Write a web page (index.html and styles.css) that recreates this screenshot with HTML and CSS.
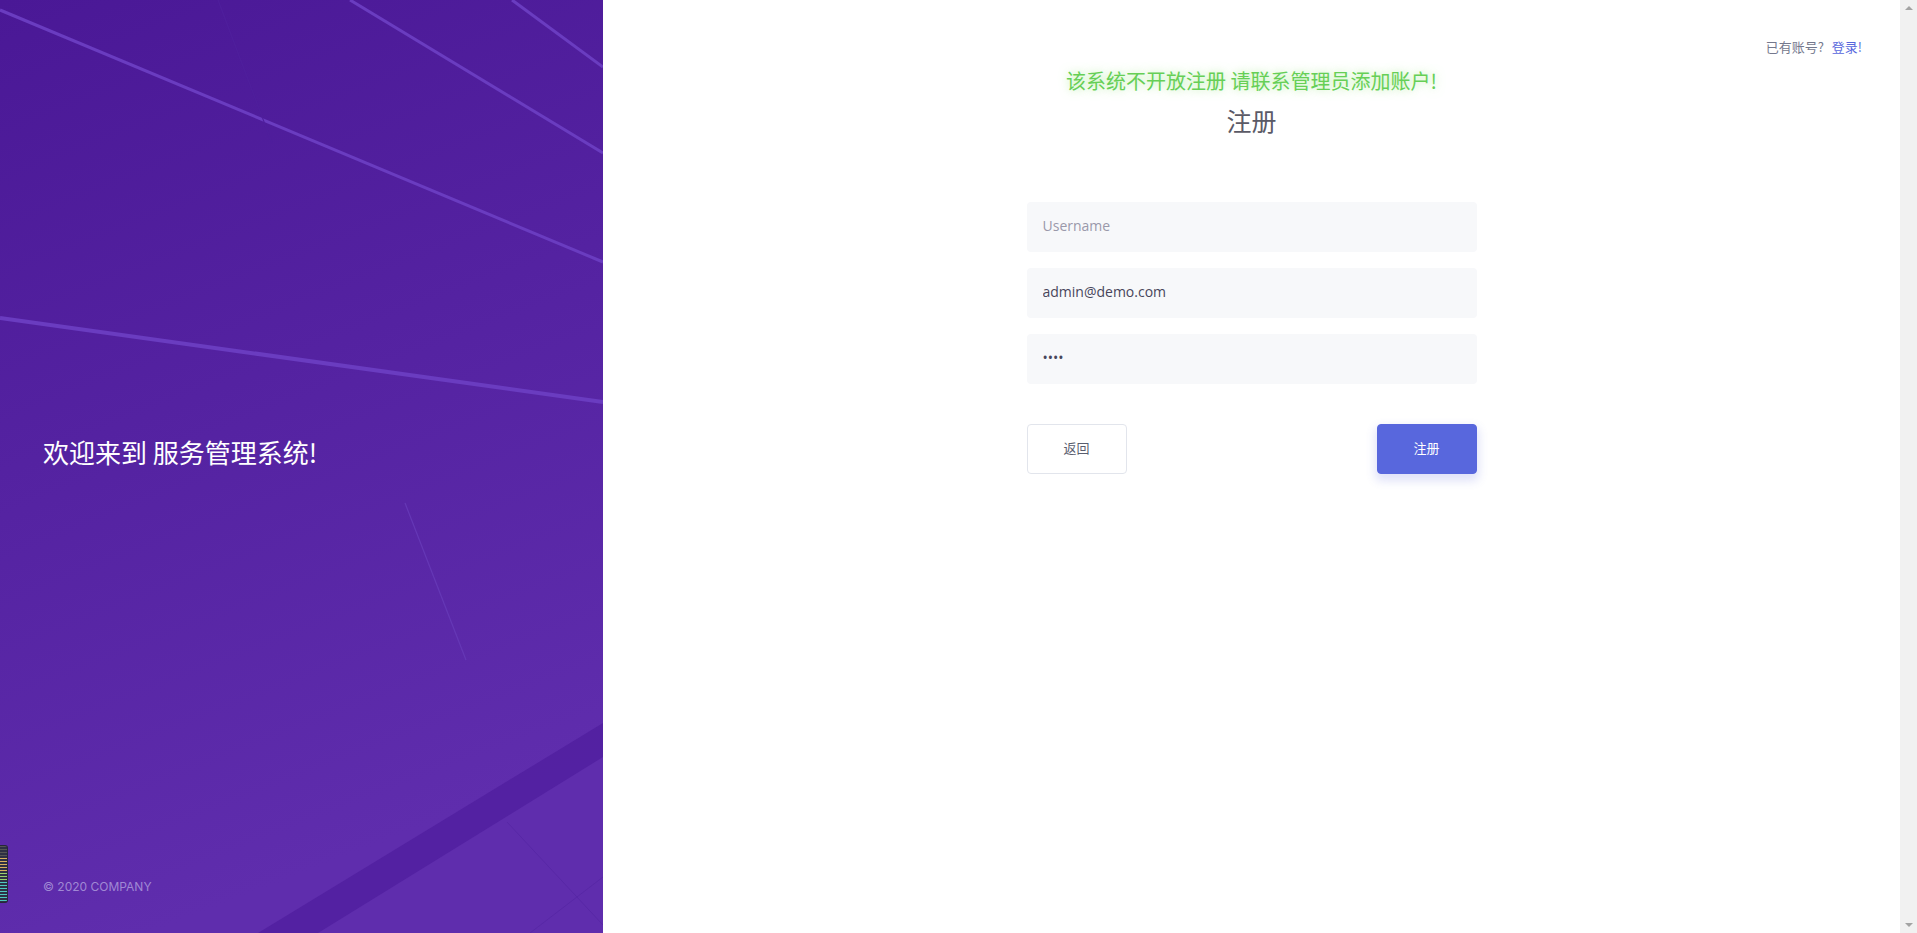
FILE: index.html
```html
<!DOCTYPE html>
<html lang="zh-CN">
<head>
<meta charset="utf-8">
<title>注册</title>
<link rel="stylesheet" href="styles.css">
</head>
<body>
<div class="page">
  <aside class="aside">
    <svg class="aside-bg" viewBox="0 0 603 933" preserveAspectRatio="none" aria-hidden="true">
      <defs>
        <linearGradient id="bg" x1="0" y1="0" x2="0.25" y2="1">
          <stop offset="0" stop-color="#4a1896"/>
          <stop offset="1" stop-color="#5f2dad"/>
        </linearGradient>
      </defs>
      <rect width="603" height="933" fill="url(#bg)"/>
      <line x1="0" y1="10" x2="603" y2="262" stroke="#6a3cc0" stroke-width="3"/>
      <line x1="350" y1="0" x2="603" y2="153" stroke="#6a3cc0" stroke-width="3"/>
      <line x1="512" y1="0" x2="603" y2="67" stroke="#6a3cc0" stroke-width="3"/>
      <line x1="0" y1="318" x2="603" y2="402" stroke="#6a3cc0" stroke-width="4"/>
      <line x1="218" y1="0" x2="272" y2="143" stroke="#4f1f9c" stroke-width="1.2"/>
      <line x1="405" y1="503" x2="466" y2="660" stroke="#6538b6" stroke-width="1.2"/>
      <polygon points="603,723 603,757 318,933 258,933" fill="#4f1d9c" opacity="0.7"/>
      <line x1="507" y1="822" x2="603" y2="925" stroke="#5828a6" stroke-width="1"/>
      <line x1="603" y1="877" x2="530" y2="933" stroke="#5828a6" stroke-width="1"/>
    </svg>
    <div class="aside-body">
      <h3 class="welcome">欢迎来到 服务管理系统!</h3>
    </div>
    <div class="aside-footer">© 2020 COMPANY</div>
  </aside>

  <main class="main">
    <div class="topbar">
      <span class="topbar-text">已有账号?</span>
      <a class="topbar-link" href="#">登录!</a>
    </div>
    <div class="form-wrap">
      <div class="notice">该系统不开放注册 请联系管理员添加账户!</div>
      <h3 class="title">注册</h3>
      <form class="form">
        <input class="field" type="text" placeholder="Username">
        <input class="field" type="text" value="admin@demo.com">
        <input class="field" type="password" value="demo">
        <div class="actions">
          <button type="button" class="btn btn-back">返回</button>
          <button type="button" class="btn btn-primary">注册</button>
        </div>
      </form>
    </div>
  </main>

  <div class="scrollbar" aria-hidden="true">
    <span class="arrow arrow-up"></span>
    <span class="arrow arrow-down"></span>
  </div>
</div>
<div class="ext-widget" aria-hidden="true"></div>
</body>
</html>
```

FILE: styles.css
```css
body {
  margin: 0;
  font-family: "Open Sans", "Noto Sans CJK SC", sans-serif;
  background: #fff;
  overflow: hidden;
}
.page {
  display: flex;
  height: 933px;
}
.aside {
  position: relative;
  width: 603px;
  flex: 0 0 603px;
  display: flex;
  flex-direction: column;
  overflow: hidden;
  color: #fff;
}
.aside-bg {
  position: absolute;
  inset: 0;
  width: 100%;
  height: 100%;
}
.aside-body {
  position: relative;
  flex: 1;
  padding: 434px 43px 0;
}
.welcome {
  margin: 0;
  font-family: "Noto Sans CJK SC", sans-serif;
  font-weight: 400;
  font-size: 26px;
  line-height: 36px;
  color: #fff;
}
.aside-footer {
  position: relative;
  padding: 0 43px 38px;
  font-family: "Inter", "Open Sans", sans-serif;
  font-size: 12px;
  line-height: 16px;
  color: #a088d4;
}
.main {
  flex: 1;
  display: flex;
  flex-direction: column;
  padding: 36px 38px 0;
}
.topbar {
  display: flex;
  justify-content: flex-end;
  align-items: center;
  gap: 8px;
  height: 20px;
  font-family: "Noto Sans CJK SC", sans-serif;
  font-size: 13px;
}
.topbar-text {
  color: #74788d;
}
.topbar-link {
  color: #5867dd;
  text-decoration: none;
}
.form-wrap {
  width: 450px;
  margin: 10px auto 0;
  display: flex;
  flex-direction: column;
  align-items: center;
}
.notice {
  font-family: "Noto Sans CJK SC", sans-serif;
  font-size: 20px;
  line-height: 30px;
  color: #66cf56;
  text-shadow: 0 0 10px rgba(130, 225, 100, 0.6);
  white-space: nowrap;
}
.title {
  margin: 6px 0 0;
  font-family: "Noto Sans CJK SC", sans-serif;
  font-weight: 400;
  font-size: 25px;
  line-height: 36px;
  color: #5b5a66;
}
.form {
  width: 100%;
  margin-top: 64px;
  display: flex;
  flex-direction: column;
  gap: 16px;
}
.field {
  box-sizing: border-box;
  width: 100%;
  height: 50px;
  padding: 0 16px 3px;
  border: 0;
  border-radius: 4px;
  background: #f7f8fa;
  font-family: "Open Sans", sans-serif;
  font-size: 14px;
  color: #48465b;
  outline: none;
}
.field::placeholder {
  color: #9a99aa;
}
.actions {
  display: flex;
  justify-content: space-between;
  margin-top: 24px;
}
.btn {
  box-sizing: border-box;
  width: 100px;
  height: 50px;
  padding: 0 0 3px;
  border-radius: 4px;
  font-family: "Noto Sans CJK SC", sans-serif;
  font-size: 13px;
  cursor: pointer;
}
.btn-back {
  background: #fff;
  border: 1px solid #e2e5ec;
  color: #595d6e;
}
.btn-primary {
  background: #5867dd;
  border: 1px solid #5867dd;
  color: #fff;
  box-shadow: 0 5px 10px 2px rgba(88, 103, 221, 0.19);
}
.scrollbar {
  flex: 0 0 17px;
  background: #f1f1f1;
  display: flex;
  flex-direction: column;
  justify-content: space-between;
  align-items: center;
  padding: 6px 0;
  box-sizing: border-box;
}
.arrow {
  width: 0;
  height: 0;
  border-left: 4px solid transparent;
  border-right: 4px solid transparent;
}
.arrow-up {
  border-bottom: 4px solid #a3a3a3;
}
.arrow-down {
  border-top: 4px solid #a3a3a3;
}
.ext-widget {
  position: fixed;
  left: 0;
  top: 845px;
  width: 7px;
  height: 56px;
  border: 1px solid #262838;
  border-left: 0;
  border-radius: 0 3px 3px 0;
  background:
    repeating-linear-gradient(to bottom, transparent 0 1px, #2e3044 1px 3px),
    linear-gradient(to bottom, #555 0 20%, #d8b060 20% 45%, #9bd070 45% 65%, #4ec8c0 65% 100%);
}
```
